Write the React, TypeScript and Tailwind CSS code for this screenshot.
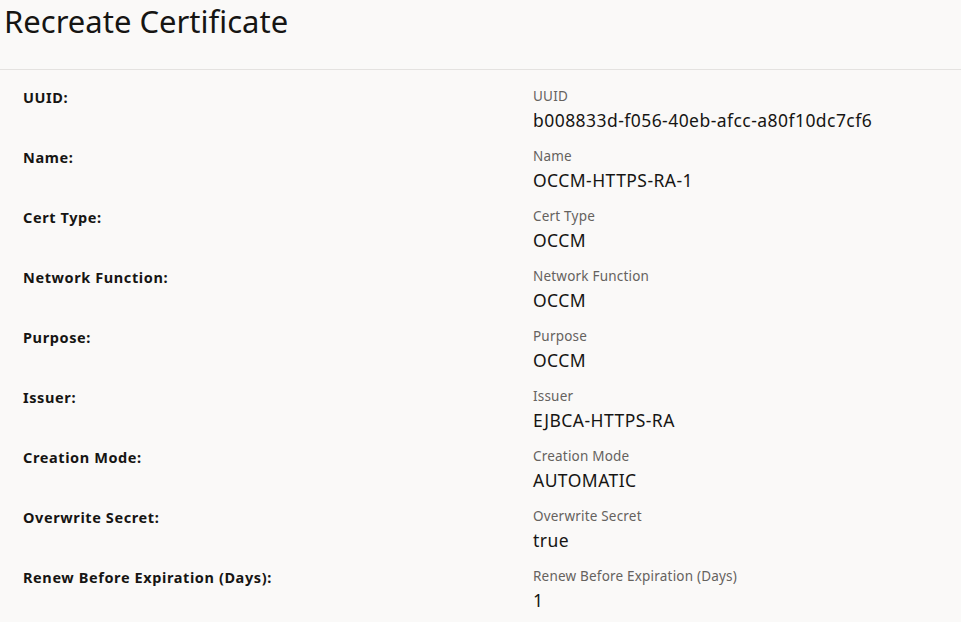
import React from 'react';

const FIELDS: { label: string; value: string }[] = [
  { label: 'UUID', value: 'b008833d-f056-40eb-afcc-a80f10dc7cf6' },
  { label: 'Name', value: 'OCCM-HTTPS-RA-1' },
  { label: 'Cert Type', value: 'OCCM' },
  { label: 'Network Function', value: 'OCCM' },
  { label: 'Purpose', value: 'OCCM' },
  { label: 'Issuer', value: 'EJBCA-HTTPS-RA' },
  { label: 'Creation Mode', value: 'AUTOMATIC' },
  { label: 'Overwrite Secret', value: 'true' },
  { label: 'Renew Before Expiration (Days)', value: '1' },
];

export default function App() {
  return (
    <div
      className="min-h-[622px] w-full bg-[#faf9f8] text-[#161513]"
      style={{ fontFamily: '"Noto Sans", "Open Sans", sans-serif' }}
    >
      {/* header */}
      <div className="h-[70px] border-b border-[#e4e2e0] px-[4px] pt-[1px]">
        <h1 className="text-[31px] leading-[40px] font-normal">Recreate Certificate</h1>
      </div>

      {/* details */}
      <div className="pt-[17px] pl-[23px]">
        {FIELDS.map((f) => (
          <div key={f.label} className="grid grid-cols-[510px_1fr] h-[60px]">
            <div className="text-[14.5px] leading-[20px] font-bold tracking-[0.6px]">
              {f.label}:
            </div>
            <div>
              <div className="text-[13.5px] leading-[18px] tracking-[0.2px] text-[#65625e]">{f.label}</div>
              <div className="mt-[3px] text-[17.5px] leading-[24px] tracking-[0.45px]">{f.value}</div>
            </div>
          </div>
        ))}
      </div>
    </div>
  );
}
